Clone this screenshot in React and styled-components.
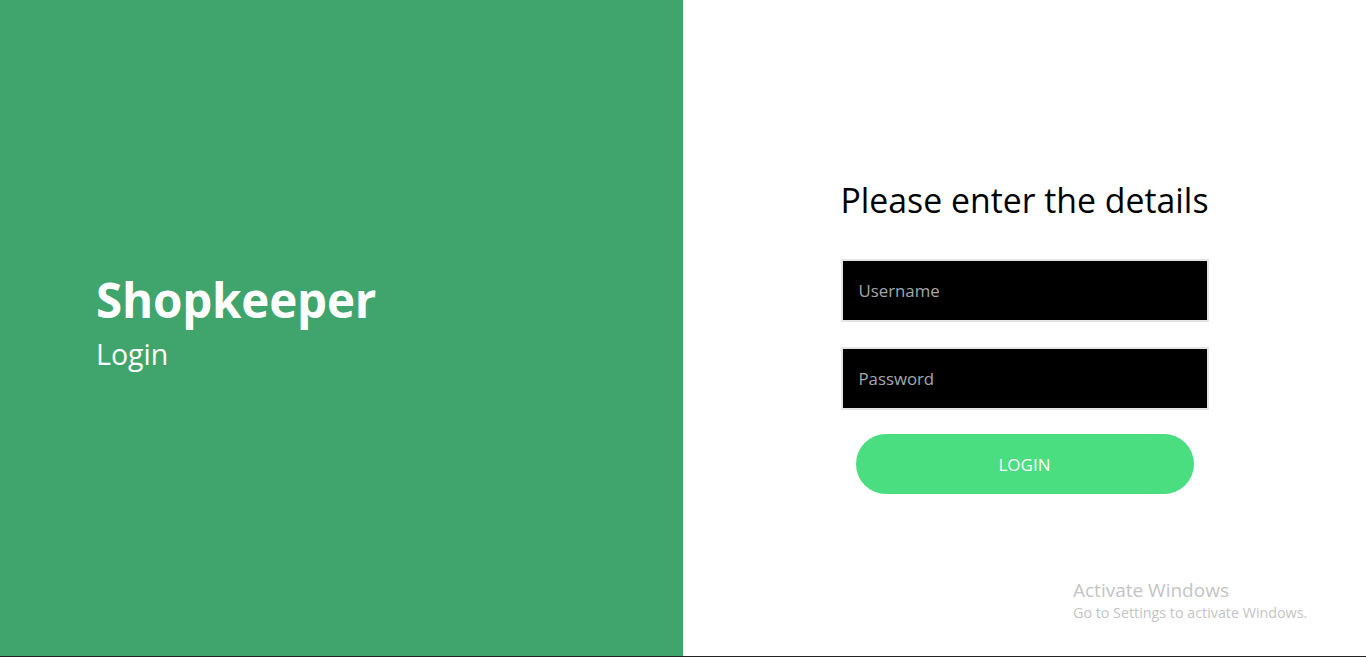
import styled, { createGlobalStyle } from "styled-components";

const Global = createGlobalStyle`
  html, body {
    margin: 0;
    padding: 0;
    background: #fff;
    font-family: "Open Sans", "Noto Sans", sans-serif;
  }
  * {
    box-sizing: border-box;
  }
`;

const App = () => {
  return (
    <Page>
      <Global />
      <Brand>
        <Title>Shopkeeper</Title>
        <Subtitle>Login</Subtitle>
      </Brand>
      <FormSide>
        <Form onSubmit={(e) => e.preventDefault()}>
          <Heading>Please enter the details</Heading>
          <Field type="text" placeholder="Username" />
          <Field type="password" placeholder="Password" />
          <Button type="submit">LOGIN</Button>
        </Form>
        <Watermark>
          <strong>Activate Windows</strong>
          <span>Go to Settings to activate Windows.</span>
        </Watermark>
      </FormSide>
      <Taskbar />
    </Page>
  );
};

const Page = styled.div`
  position: relative;
  display: grid;
  grid-template-columns: 683px 1fr;
  height: 657px;
  overflow: hidden;
`;

const Brand = styled.div`
  background: #40a56d;
  color: #fff;
  display: flex;
  flex-direction: column;
  justify-content: center;
  padding: 0 0 10px 96px;
`;

const Title = styled.h1`
  margin: 0;
  font-size: 47.5px;
  font-weight: 700;
  line-height: 56px;
  letter-spacing: -0.2px;
`;

const Subtitle = styled.h2`
  margin: 4px 0 0;
  font-size: 28.5px;
  font-weight: 400;
  line-height: 44px;
`;

const FormSide = styled.div`
  position: relative;
  display: flex;
  justify-content: center;
  padding-top: 175px;
`;

const Form = styled.form`
  width: 368px;
  display: flex;
  flex-direction: column;
  align-items: center;
`;

const Heading = styled.h3`
  margin: 0 0 34px;
  font-size: 33.8px;
  font-weight: 400;
  line-height: 50px;
  color: #000;
  white-space: nowrap;
`;

const Field = styled.input`
  width: 368px;
  height: 63px;
  margin-bottom: 25px;
  padding: 0 16px;
  background: #000;
  border: 2px solid #e4e4e4;
  color: #fff;
  font-family: inherit;
  font-size: 16.8px;
  outline: none;
  &::placeholder {
    color: #a3a8ae;
  }
`;

const Button = styled.button`
  width: 338px;
  height: 60px;
  margin-top: -1px;
  border: none;
  border-radius: 30px;
  background: #4ade80;
  color: #fff;
  font-family: inherit;
  font-size: 17px;
  cursor: pointer;
`;

const Watermark = styled.div`
  position: absolute;
  left: 390px;
  top: 577px;
  display: flex;
  flex-direction: column;
  color: #c4c4c4;
  strong {
    font-weight: 400;
    font-size: 19px;
    line-height: 26px;
  }
  span {
    font-size: 14.3px;
    line-height: 20px;
  }
`;

const Taskbar = styled.div`
  position: absolute;
  left: 0;
  right: 0;
  bottom: 0;
  height: 1px;
  background: #222;
`;

export default App;
